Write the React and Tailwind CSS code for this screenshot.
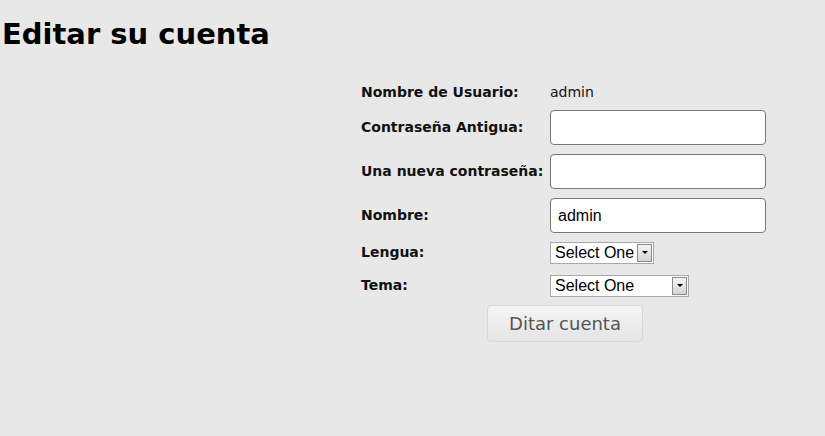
import React from "react";

const FakeSelect = ({ width }) => (
  <div className={`flex h-[22px] items-center justify-between border border-[#a9a9a9] bg-white ${width}`}>
    <span className="pl-[4px] font-['Liberation_Sans',sans-serif] text-[16px] leading-none text-black">Select One</span>
    <span className="mr-[1px] flex h-[18px] w-[15px] items-center justify-center border border-[#8a8a8a] bg-gradient-to-b from-[#f4f4f4] to-[#d4d4d4]">
      <span className="h-0 w-0 border-x-[3px] border-t-[3px] border-x-transparent border-t-black" />
    </span>
  </div>
);

const Row = ({ label, children, h }) => (
  <div className={`flex items-center ${h}`}>
    <div className="w-[189px] text-[14px] font-bold text-[#111]">{label}</div>
    {children}
  </div>
);

const App = () => {
  return (
    <div className="h-[436px] w-[825px] bg-[#e8e8e8] font-['DejaVu_Sans',sans-serif]">
      <h1 className="pl-[2px] pt-[14px] text-[29px] font-bold leading-[40px] text-black">Editar su cuenta</h1>

      <div className="ml-[361px] mt-[27px] flex flex-col">
        <Row label="Nombre de Usuario:" h="h-[22px]">
          <span className="text-[14px] text-[#111]">admin</span>
        </Row>
        <div className="flex flex-col gap-[9px] pt-[7px]">
          <Row label="Contraseña Antigua:" h="h-[35px]">
            <div className="h-[35px] w-[216px] rounded-[4px] border border-[#777] bg-white" />
          </Row>
          <Row label="Una nueva contraseña:" h="h-[35px]">
            <div className="h-[35px] w-[216px] rounded-[4px] border border-[#777] bg-white" />
          </Row>
          <Row label="Nombre:" h="h-[35px]">
            <div className="flex h-[35px] w-[216px] items-center rounded-[4px] border border-[#777] bg-white pl-[7px] font-['Liberation_Sans',sans-serif] text-[16px] text-black">
              admin
            </div>
          </Row>
        </div>
        <div className="flex flex-col gap-[12px] pt-[9px]">
          <Row label="Lengua:" h="h-[21px]">
            <FakeSelect width="w-[104px]" />
          </Row>
          <Row label="Tema:" h="h-[21px]">
            <FakeSelect width="w-[139px]" />
          </Row>
        </div>
        <div className="pl-[126px] pt-[9px]">
          <button className="h-[37px] w-[156px] rounded-[4px] border border-[#d8d8d8] bg-gradient-to-b from-[#f5f5f5] to-[#e4e4e4] text-[18px] text-[#555]">
            Ditar cuenta
          </button>
        </div>
      </div>
    </div>
  );
};

export default App;
